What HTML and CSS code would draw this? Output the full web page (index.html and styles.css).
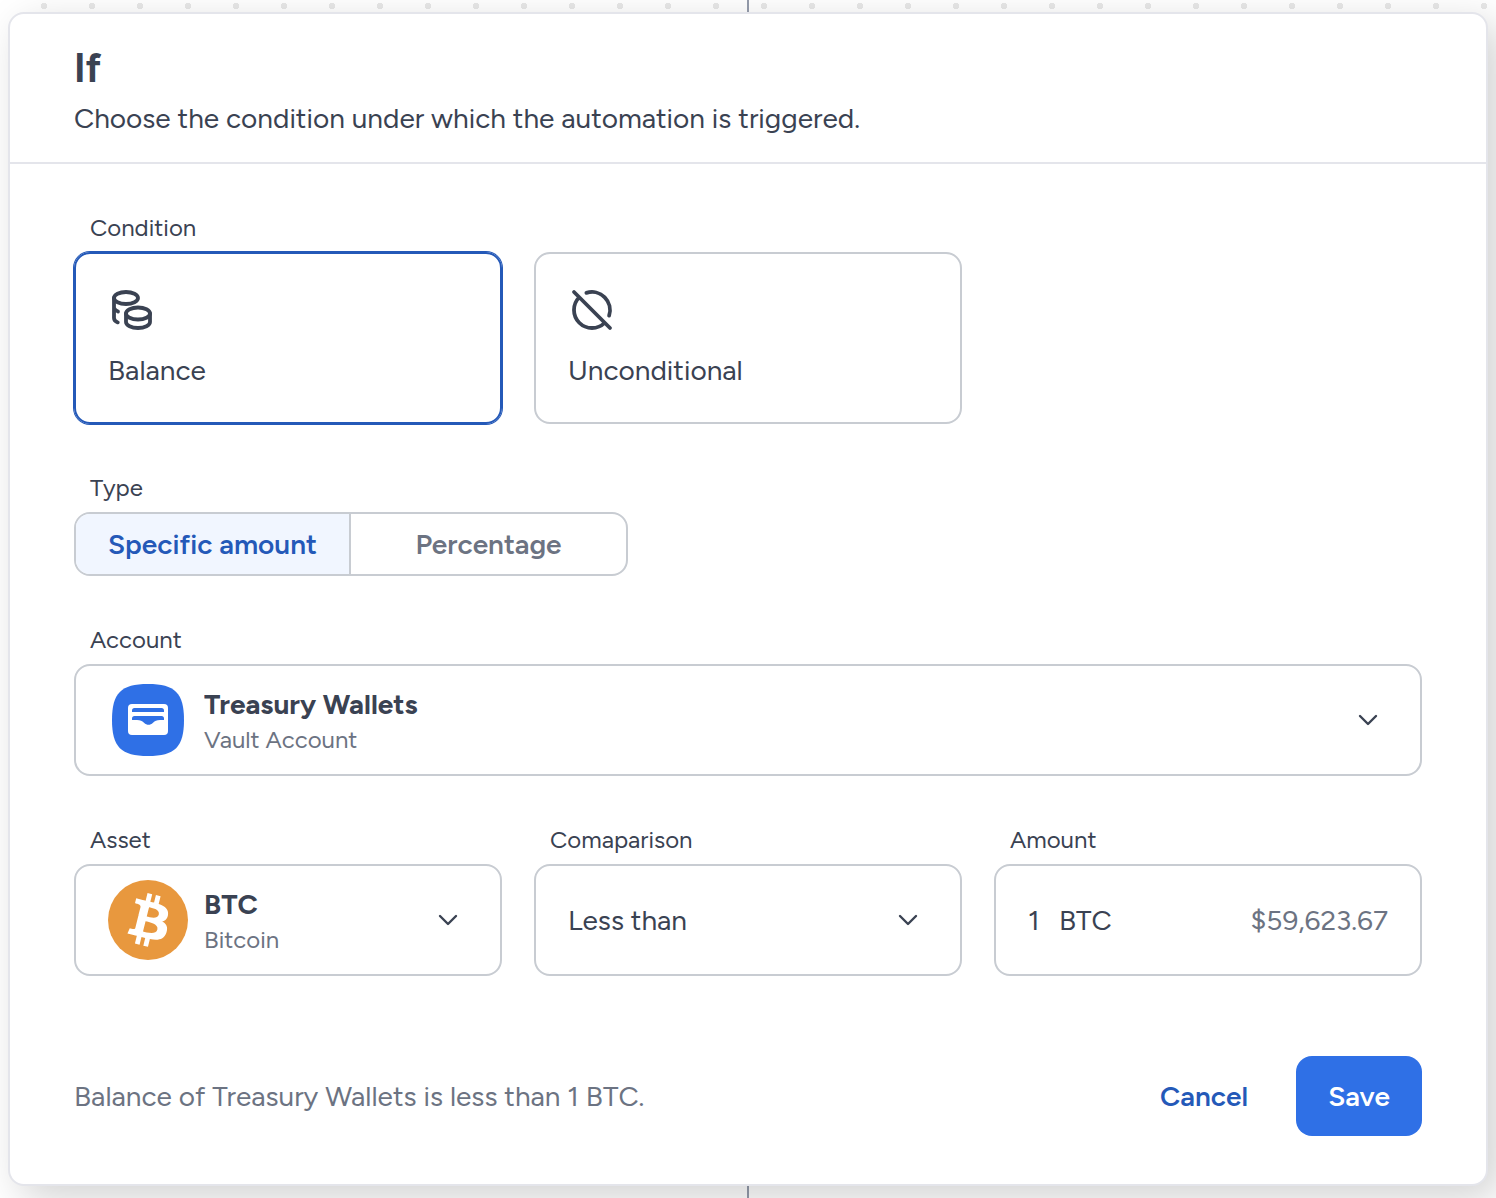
FILE: index.html
```html
<!DOCTYPE html>
<html lang="en">
<head>
<meta charset="utf-8">
<meta name="viewport" content="width=device-width, initial-scale=1">
<title>If – automation condition</title>
<link rel="stylesheet" href="styles.css">
</head>
<body>
<main class="canvas">
  <form class="panel">
    <header class="panel-header">
      <h1 class="title">If</h1>
      <p class="subtitle">Choose the condition under which the automation is triggered.</p>
    </header>

    <div class="panel-body">
      <fieldset class="group">
        <legend class="label">Condition</legend>
        <div class="columns">
          <label class="option">
            <input class="choice" type="radio" name="condition" value="balance" checked>
            <svg class="option-icon" viewBox="0 0 48 48" aria-hidden="true">
              <ellipse cx="18" cy="12" rx="12" ry="6"/>
              <path d="M6 12v20c0 2 1.200 3.400 3.800 4.400M6 22c.8 1.800 2.200 2.900 4 3.600"/>
              <ellipse cx="30" cy="27.500" rx="12" ry="6"/>
              <path d="M18 27.500V36c0 3.300 5.400 6 12 6s12-2.700 12-6v-8.500"/>
            </svg>
            <span>Balance</span>
          </label>
          <label class="option">
            <input class="choice" type="radio" name="condition" value="unconditional">
            <svg class="option-icon" viewBox="0 0 48 48" aria-hidden="true">
              <path d="M6 6l36 36M18.400 6.900A18 18 0 0 1 41.100 29.600M11.270 11.270A18 18 0 0 0 36.730 36.730"/>
            </svg>
            <span>Unconditional</span>
          </label>
        </div>
      </fieldset>

      <fieldset class="group">
        <legend class="label">Type</legend>
        <div class="segments">
          <label class="segment">
            <input class="choice" type="radio" name="type" value="amount" checked>
            <span>Specific amount</span>
          </label>
          <label class="segment">
            <input class="choice" type="radio" name="type" value="percentage">
            <span>Percentage</span>
          </label>
        </div>
      </fieldset>

      <div class="group">
        <label class="label" for="account">Account</label>
        <div class="picker">
          <select class="select select-titled" id="account">
            <option>Treasury Wallets</option>
          </select>
          <svg class="picker-icon" viewBox="0 0 80 80" aria-hidden="true">
            <path fill="#2f70e6" d="M40 4c27 0 36 9 36 36s-9 36-36 36S4 67 4 40 13 4 40 4z"/>
            <rect x="20" y="24" width="40" height="31" rx="4" fill="#fff"/>
            <path fill="#2f70e6" d="M24 32v-1.500a2.500 2.500 0 0 1 2.500-2.500h27a2.500 2.500 0 0 1 2.500 2.500V32zM24 40v-1.500a2.500 2.500 0 0 1 2.500-2.500h27a2.500 2.500 0 0 1 2.500 2.500V40h-4c-3.500 0-5 1-7 2.800-3 2.700-6 2.700-9 0C34 41 32.500 40 29 40z"/>
          </svg>
          <span class="picker-note">Vault Account</span>
          <svg class="chevron" viewBox="0 0 40 40" aria-hidden="true"><path d="M12 16l8 8 8-8"/></svg>
        </div>
      </div>

      <div class="columns">
        <div class="group">
          <label class="label" for="asset">Asset</label>
          <div class="picker">
            <select class="select select-titled" id="asset">
              <option>BTC</option>
            </select>
            <svg class="picker-icon" viewBox="0 0 32 32" aria-hidden="true">
              <circle cx="16" cy="16" r="16" fill="#e8983e"/>
              <path fill="#fff" transform="translate(16.250 16) scale(1.080) translate(-16 -16)" d="M23.189 14.02c.314-2.096-1.283-3.223-3.465-3.975l.708-2.84-1.728-.43-.69 2.765c-.454-.114-.92-.22-1.385-.326l.695-2.783L15.596 6l-.708 2.839c-.376-.086-.746-.17-1.104-.26l.002-.009-2.384-.595-.46 1.846s1.283.294 1.256.312c.7.175.826.638.805 1.006l-.806 3.235c.048.012.11.03.18.057l-.183-.045-1.13 4.532c-.086.212-.303.531-.793.41.018.025-1.256-.313-1.256-.313l-.858 1.978 2.25.561c.418.105.828.215 1.231.318l-.715 2.872 1.727.43.708-2.84c.472.127.93.245 1.378.357l-.706 2.828 1.728.43.715-2.866c2.948.558 5.164.333 6.097-2.333.752-2.146-.037-3.385-1.588-4.192 1.13-.26 1.98-1.003 2.207-2.538zm-3.95 5.538c-.533 2.147-4.148.986-5.32.695l.95-3.805c1.172.293 4.929.872 4.37 3.11zm.535-5.569c-.487 1.953-3.495.96-4.47.717l.86-3.45c.975.243 4.118.696 3.61 2.733z"/>
            </svg>
            <span class="picker-note">Bitcoin</span>
            <svg class="chevron" viewBox="0 0 40 40" aria-hidden="true"><path d="M12 16l8 8 8-8"/></svg>
          </div>
        </div>

        <div class="group">
          <label class="label" for="comparison">Comaparison</label>
          <div class="picker">
            <select class="select" id="comparison">
              <option>Less than</option>
            </select>
            <svg class="chevron" viewBox="0 0 40 40" aria-hidden="true"><path d="M12 16l8 8 8-8"/></svg>
          </div>
        </div>

        <div class="group">
          <label class="label" for="amount">Amount</label>
          <div class="amount">
            <input class="amount-input" id="amount" type="text" inputmode="decimal" value="1">
            <span>BTC</span>
            <span class="amount-value">$59,623.67</span>
          </div>
        </div>
      </div>
    </div>

    <footer class="panel-footer">
      <p class="summary">Balance of Treasury Wallets is less than 1 BTC.</p>
      <button class="button" type="button">Cancel</button>
      <button class="button button-primary" type="submit">Save</button>
    </footer>
  </form>
</main>
</body>
</html>
```
FILE: styles.css
```css
:root {
  --ink: #3a4252;
  --muted: #6c7382;
  --line: #c8ccd2;
  --edge: #e4e5eb;
  --blue: #2f70e6;
  --blue-deep: #2459b8;
}

* {
  box-sizing: border-box;
}

body {
  margin: 0;
  color: var(--ink);
  font-family: "Figtree", Lato, sans-serif;
  font-size: 28px;
  line-height: 40px;
}

h1,
p,
fieldset,
legend {
  margin: 0;
  padding: 0;
  border: 0;
}

fieldset {
  min-width: 0;
}

input,
select,
button {
  margin: 0;
  color: inherit;
  font: inherit;
}

/* Dotted workflow canvas with the connector running behind the panel */
.canvas {
  min-height: 100vh;
  padding: 12px 8px;
  background:
    linear-gradient(#959cac, #959cac) center / 2px 100% no-repeat,
    radial-gradient(circle, #e8e8e8 2px, #e8e8e8 3px, transparent 3px) 20px -18px / 48px 48px,
    #fff;
}

.panel {
  border: 2px solid var(--edge);
  border-radius: 16px;
  background: #fff;
  box-shadow: 12px 12px 40px rgba(0, 0, 0, 0.18);
}

.panel-header {
  display: grid;
  gap: 8px;
  padding: 32px 64px 24px;
  border-bottom: 2px solid var(--edge);
}

.title {
  font-size: 40px;
  font-weight: 700;
  line-height: 44px;
}

.panel-body {
  display: grid;
  gap: 48px;
  padding: 48px 64px 80px;
}

.columns {
  display: grid;
  grid-template-columns: repeat(3, minmax(0, 1fr));
  gap: 32px;
}

.label {
  display: block;
  padding: 0 16px;
  margin-bottom: 8px;
  font-size: 24px;
  line-height: 32px;
}

.choice {
  position: absolute;
  opacity: 0;
}

.option {
  display: grid;
  gap: 16px;
  height: 172px;
  padding: 32px;
  border: 2px solid var(--line);
  border-radius: 16px;
  align-content: start;
}

.option:has(:checked) {
  border-color: var(--blue-deep);
  box-shadow: 0 0 0 1px var(--blue-deep);
}

.option-icon {
  width: 48px;
  height: 48px;
  fill: none;
  stroke: var(--ink);
  stroke-width: 3.8;
  stroke-linecap: round;
  stroke-linejoin: round;
}

.segments {
  display: inline-grid;
  grid-template-columns: 1fr 1fr;
  border: 2px solid var(--line);
  border-radius: 16px;
  overflow: hidden;
  vertical-align: top;
}

.segment {
  min-width: 275px;
  padding: 10px 32px;
  color: var(--muted);
  font-weight: 600;
  text-align: center;
}

.segment:first-child {
  border-right: 2px solid var(--line);
}

.segment:has(:checked) {
  background: #f1f6ff;
  color: var(--blue-deep);
}

/* The select fills the whole box; icon, note and chevron sit in cells above it */
.picker {
  display: grid;
  grid-template-columns: 80px 1fr 40px;
  column-gap: 16px;
  align-items: center;
  height: 112px;
}

.select {
  grid-area: 1 / 1 / 2 / 4;
  width: 100%;
  height: 112px;
  padding: 0 88px 0 32px;
  border: 2px solid var(--line);
  border-radius: 16px;
  background: #fff;
  appearance: none;
}

.select-titled {
  padding: 0 88px 32px 128px;
  font-weight: 700;
}

.picker-icon,
.picker-note,
.chevron {
  grid-row: 1;
  pointer-events: none;
}

.picker-icon {
  grid-column: 1;
  width: 80px;
  height: 80px;
  margin-left: 34px;
}

.picker-note {
  grid-column: 2;
  padding: 40px 0 0 34px;
  color: var(--muted);
  font-size: 24px;
  line-height: 32px;
}

.chevron {
  grid-column: 3;
  justify-self: end;
  width: 40px;
  height: 40px;
  margin-right: 34px;
  fill: none;
  stroke: var(--ink);
  stroke-width: 2.4;
  stroke-linecap: round;
  stroke-linejoin: round;
}

.amount {
  display: flex;
  gap: 16px;
  align-items: center;
  height: 112px;
  padding: 0 32px;
  border: 2px solid var(--line);
  border-radius: 16px;
}

.amount-input {
  width: 15px;
  padding: 0;
  border: 0;
  outline: 0;
  background: none;
}

.amount-value {
  margin-left: auto;
  color: var(--muted);
}

.panel-footer {
  display: flex;
  gap: 16px;
  align-items: center;
  padding: 0 64px 48px;
}

.summary {
  margin-right: auto;
  color: var(--muted);
}

.button {
  height: 80px;
  padding: 0 32px;
  border: 0;
  border-radius: 16px;
  background: none;
  color: var(--blue-deep);
  font-weight: 600;
}

.button-primary {
  min-width: 126px;
  background: var(--blue);
  color: #fff;
}
```
